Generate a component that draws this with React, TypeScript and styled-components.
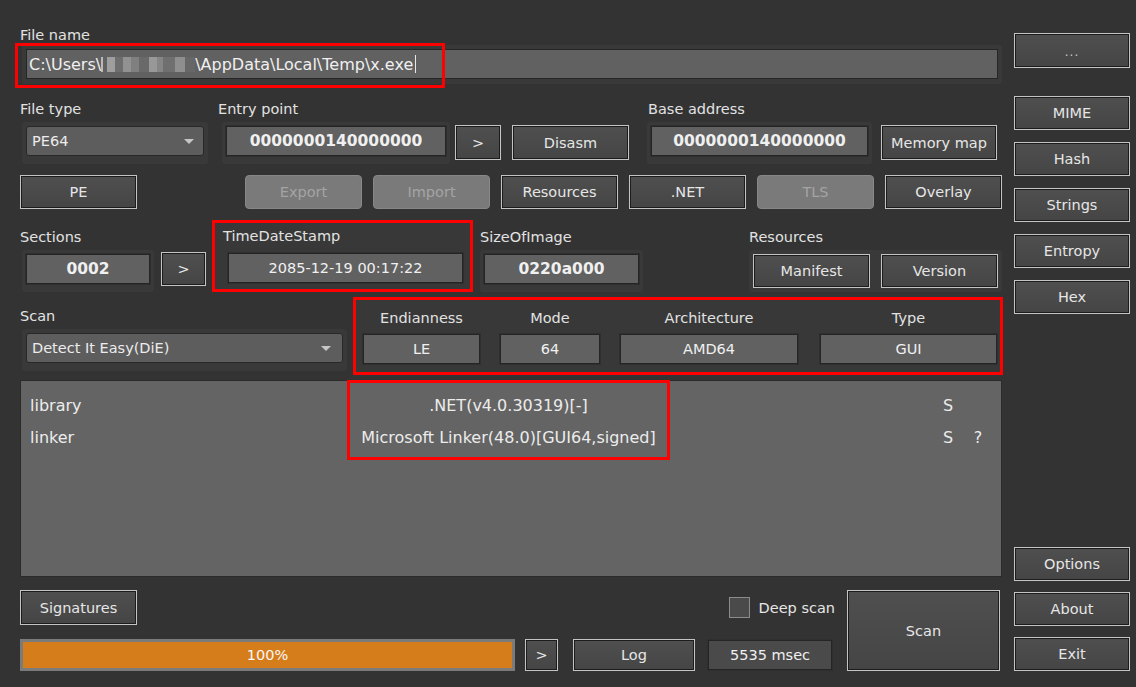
import React from "react";
import styled, { createGlobalStyle } from "styled-components";

const GlobalStyle = createGlobalStyle`
  html, body {
    margin: 0;
    padding: 0;
    background: #333333;
  }
  body {
    font-family: "DejaVu Sans", "Liberation Sans", sans-serif;
    font-size: 14.5px;
    color: #e0e0e0;
  }
  * {
    box-sizing: border-box;
  }
`;

const Window = styled.div`
  width: 1136px;
  height: 687px;
  background: #333333;
  display: flex;
  gap: 10px;
  padding: 26px 0 16px 20px;
  overflow: hidden;
`;

const Main = styled.div`
  width: 984px;
  display: flex;
  flex-direction: column;
`;

const Side = styled.div`
  width: 116px;
  display: flex;
  flex-direction: column;
  padding-top: 7px;
`;

const Row = styled.div<{ $mt: number }>`
  display: flex;
  align-items: flex-end;
  margin-top: ${(p) => p.$mt}px;
`;

const Group = styled.div<{ $ml?: number; $mb?: number }>`
  display: flex;
  flex-direction: column;
  flex: none;
  margin-left: ${(p) => p.$ml ?? 0}px;
  margin-bottom: ${(p) => p.$mb ?? 0}px;
`;

const Label = styled.div<{ $indent?: number; $center?: boolean }>`
  height: 18px;
  line-height: 18px;
  margin-left: ${(p) => p.$indent ?? 0}px;
  text-align: ${(p) => (p.$center ? "center" : "left")};
  color: #e2e2e2;
  white-space: nowrap;
`;

const Frame = styled.div<{ $w: number; $ml?: number; $tight?: boolean }>`
  width: ${(p) => p.$w}px;
  margin-left: ${(p) => p.$ml ?? 0}px;
  margin-top: 4px;
  padding: ${(p) => (p.$tight ? "4px" : "4px 4px 8px")};
  background: #393939;
  border-radius: 3px;
  display: flex;
  gap: 11px;
`;

const Field = styled.div<{ $bold?: boolean; $w?: number; $dim?: boolean }>`
  flex: none;
  height: 30px;
  width: ${(p) => (p.$w ? `${p.$w}px` : "100%")};
  background: ${(p) => (p.$dim ? "#4a4a4a" : "#616161")};
  border: 1px solid #252525;
  box-shadow: 0 0 0 1px #2f2f2f;
  display: flex;
  align-items: center;
  justify-content: center;
  color: #f0f0f0;
  white-space: nowrap;
  font-weight: ${(p) => (p.$bold ? 700 : 400)};
  font-size: ${(p) => (p.$bold ? "15.5px" : "14.5px")};
`;

const Combo = styled.div<{ $pad: number }>`
  height: 30px;
  width: 100%;
  background: #5d5d5d;
  border: 1px solid #282828;
  border-radius: 3px;
  display: flex;
  align-items: center;
  padding: 0 ${(p) => p.$pad}px 0 5px;
  color: #ececec;
`;

const ComboArrow = styled.span`
  margin-left: auto;
  width: 0;
  height: 0;
  border-left: 5px solid transparent;
  border-right: 5px solid transparent;
  border-top: 5px solid #c6c6c6;
`;

const Button = styled.button<{ $w: number; $h?: number; $ml?: number; $mb?: number }>`
  flex: none;
  width: ${(p) => p.$w}px;
  height: ${(p) => p.$h ?? 34}px;
  margin: 0 0 ${(p) => p.$mb ?? 0}px ${(p) => p.$ml ?? 0}px;
  padding: 0;
  font: inherit;
  color: #e6e6e6;
  background: linear-gradient(#4f4f4f, #454545);
  border: 1px solid #c4c4c4;
  box-shadow: inset 0 0 0 1px #1c1c1c;
  cursor: default;

  &:disabled {
    background: #7a7a7a;
    border: 1px solid #878787;
    border-radius: 4px;
    box-shadow: none;
    color: #a4a4a4;
  }
`;

const SideButton = styled(Button)<{ $mt?: number }>`
  margin-top: ${(p) => p.$mt ?? 0}px;
`;

const Dots = styled.span`
  font-size: 12px;
  letter-spacing: 1px;
  color: #c8c8c8;
`;

const PathFrame = styled.div`
  position: relative;
  width: 980px;
  margin: 1px 0 0 2px;
  padding: 4px 4px 5px;
  background: #393939;
  border-radius: 3px;
`;

const PathInput = styled.div`
  height: 30px;
  background: #616161;
  border: 1px solid #262626;
  display: flex;
  align-items: center;
  padding-left: 2px;
  font-size: 16px;
  color: #f0f0f0;
  white-space: nowrap;
`;

/* pixelated block hiding the user name inside the path */
const Smudge = styled.span`
  display: inline-block;
  width: 94px;
  height: 15px;
  background: linear-gradient(
    90deg,
    #c9c9c9 0 2px,
    #616161 2px 6px,
    #a9a9a9 6px 14px,
    #707070 14px 22px,
    #9a9a9a 22px 30px,
    #858585 30px 38px,
    #6b6b6b 38px 48px,
    #a2a2a2 48px 56px,
    #8c8c8c 56px 62px,
    #727272 62px 74px,
    #979797 74px 84px,
    #686868 84px
  );
  opacity: 0.85;
`;

const Caret = styled.span`
  display: inline-block;
  width: 1px;
  height: 18px;
  margin-left: 2px;
  background: #e8e8e8;
`;

const Mark = styled.div<{ $l: number; $t: number; $w: number; $h: number }>`
  position: absolute;
  left: ${(p) => p.$l}px;
  top: ${(p) => p.$t}px;
  width: ${(p) => p.$w}px;
  height: ${(p) => p.$h}px;
  border: 3px solid #ff0000;
  pointer-events: none;
`;

const MarkedGroup = styled.div<{ $w: number; $h: number; $ml: number }>`
  flex: none;
  width: ${(p) => p.$w}px;
  height: ${(p) => p.$h}px;
  margin-left: ${(p) => p.$ml}px;
  border: 3px solid #ff0000;
`;

const GroupPanel = styled.div<{ $pad: string }>`
  height: 100%;
  padding: ${(p) => p.$pad};
  background: #383838;
  display: flex;
  flex-direction: column;
  gap: 8px;
`;

const InfoRow = styled.div`
  height: 100%;
  padding: 9px 3px 8px 7px;
  background: #383838;
  display: flex;
  gap: 20px;
`;

const InfoCell = styled.div<{ $w: number; $gap?: number }>`
  width: ${(p) => p.$w}px;
  margin-left: ${(p) => p.$gap ?? 0}px;
  display: flex;
  flex-direction: column;
  gap: 7px;
`;

const Results = styled.div`
  position: relative;
  width: 982px;
  height: 198px;
  margin-top: 5px;
  padding-top: 8px;
  background: #646464;
  border: 1px solid #2b2b2b;
  font-size: 16px;
  color: #ececec;
`;

const ResultRow = styled.div`
  display: grid;
  grid-template-columns: 326px 323px 263px 30px 30px;
  height: 32px;
  align-items: center;
  white-space: nowrap;
`;

const Cell = styled.span<{ $center?: boolean }>`
  padding-left: ${(p) => (p.$center ? 0 : 9)}px;
  text-align: ${(p) => (p.$center ? "center" : "left")};
`;

const Bottom = styled.div`
  display: flex;
  margin-top: 13px;
`;

const BottomLeft = styled.div`
  width: 820px;
  display: flex;
  flex-direction: column;
  gap: 14px;
`;

const BottomRow = styled.div`
  display: flex;
  align-items: center;
`;

const Check = styled.label`
  margin-left: auto;
  margin-right: 5px;
  display: flex;
  align-items: center;
  gap: 9px;
  color: #e6e6e6;
`;

const CheckBox = styled.span`
  width: 21px;
  height: 21px;
  background: #4a4a4a;
  border: 1px solid #8c8c8c;
`;

const Progress = styled.div`
  width: 495px;
  height: 32px;
  background: #d67d1b;
  border: 3px solid #7b7b7b;
  display: flex;
  align-items: center;
  justify-content: center;
  color: #f6f6f6;
`;

const results = [
  { type: "library", name: ".NET(v4.0.30319)[-]", s: "S", q: "" },
  { type: "linker", name: "Microsoft Linker(48.0)[GUI64,signed]", s: "S", q: "?" },
];

const tabs = ["Export", "Import", "Resources", ".NET", "TLS", "Overlay"];
const disabledTabs = ["Export", "Import", "TLS"];

const info = [
  { label: "Endianness", value: "LE", w: 117, gap: 0 },
  { label: "Mode", value: "64", w: 100, gap: 0 },
  { label: "Architecture", value: "AMD64", w: 178, gap: 0 },
  { label: "Type", value: "GUI", w: 177, gap: 2 },
];

export default function App() {
  return (
    <>
      <GlobalStyle />
      <Window>
        <Main>
          <Label>File name</Label>
          <PathFrame>
            <PathInput>
              C:\Users\
              <Smudge />
              \AppData\Local\Temp\x.exe
              <Caret />
            </PathInput>
            <Mark $l={-7} $t={-2} $w={430} $h={45} />
          </PathFrame>

          <Row $mt={16}>
            <Group>
              <Label>File type</Label>
              <Frame $w={186} $ml={2}>
                <Combo $pad={9}>
                  PE64
                  <ComboArrow />
                </Combo>
              </Frame>
            </Group>
            <Group $ml={10}>
              <Label>Entry point</Label>
              <Frame $w={228} $ml={4}>
                <Field $bold>0000000140000000</Field>
              </Frame>
            </Group>
            <Button $w={46} $h={35} $ml={5} $mb={4}>&gt;</Button>
            <Button $w={117} $h={35} $ml={11} $mb={4}>Disasm</Button>
            <Group $ml={18}>
              <Label $indent={1}>Base address</Label>
              <Frame $w={225}>
                <Field $bold>0000000140000000</Field>
              </Frame>
            </Group>
            <Button $w={116} $h={35} $ml={9} $mb={4}>Memory map</Button>
          </Row>

          <Row $mt={11}>
            <Button $w={117}>PE</Button>
            {tabs.map((t, i) => (
              <Button key={t} $w={117} $ml={i === 0 ? 108 : 11} disabled={disabledTabs.includes(t)}>
                {t}
              </Button>
            ))}
          </Row>

          <Row $mt={11}>
            <Group>
              <Label>Sections</Label>
              <Frame $w={132} $ml={2}>
                <Field $bold>0002</Field>
              </Frame>
            </Group>
            <Button $w={45} $ml={7} $mb={6}>&gt;</Button>
            <MarkedGroup $w={261} $h={72} $ml={6}>
              <GroupPanel $pad="4px 7px 6px 13px">
                <Label $indent={-5}>TimeDateStamp</Label>
                <Field $w={235}>2085-12-19 00:17:22</Field>
              </GroupPanel>
            </MarkedGroup>
            <Group $ml={7}>
              <Label>SizeOfImage</Label>
              <Frame $w={163}>
                <Field $bold>0220a000</Field>
              </Frame>
            </Group>
            <Group $ml={106}>
              <Label>Resources</Label>
              <Frame $w={253} $tight>
                <Button $w={117}>Manifest</Button>
                <Button $w={117}>Version</Button>
              </Frame>
            </Group>
          </Row>

          <Row $mt={5}>
            <Group $mb={4}>
              <Label>Scan</Label>
              <Frame $w={325} $ml={2}>
                <Combo $pad={11}>
                  Detect It Easy(DiE)
                  <ComboArrow />
                </Combo>
              </Frame>
            </Group>
            <MarkedGroup $w={650} $h={78} $ml={6}>
              <InfoRow>
                {info.map((c) => (
                  <InfoCell key={c.label} $w={c.w} $gap={c.gap}>
                    <Label $center>{c.label}</Label>
                    <Field>{c.value}</Field>
                  </InfoCell>
                ))}
              </InfoRow>
            </MarkedGroup>
          </Row>

          <Results>
            {results.map((r) => (
              <ResultRow key={r.type}>
                <Cell>{r.type}</Cell>
                <Cell $center>{r.name}</Cell>
                <span />
                <Cell $center>{r.s}</Cell>
                <Cell $center>{r.q}</Cell>
              </ResultRow>
            ))}
            <Mark $l={326} $t={-1} $w={323} $h={80} />
          </Results>

          <Bottom>
            <BottomLeft>
              <BottomRow>
                <Button $w={117} $h={35}>Signatures</Button>
                <Check>
                  <CheckBox />
                  Deep scan
                </Check>
              </BottomRow>
              <BottomRow>
                <Progress>100%</Progress>
                <Button $w={33} $h={32} $ml={10}>&gt;</Button>
                <Button $w={122} $h={32} $ml={15}>Log</Button>
                <Field $w={124} $dim style={{ marginLeft: 13 }}>5535 msec</Field>
              </BottomRow>
            </BottomLeft>
            <Button $w={153} $h={81} $ml={7}>Scan</Button>
          </Bottom>
        </Main>

        <Side>
          <SideButton $w={116} $h={35}>
            <Dots>...</Dots>
          </SideButton>
          <SideButton $w={116} $mt={28}>MIME</SideButton>
          <SideButton $w={116} $mt={12}>Hash</SideButton>
          <SideButton $w={116} $mt={12}>Strings</SideButton>
          <SideButton $w={116} $mt={12}>Entropy</SideButton>
          <SideButton $w={116} $mt={12}>Hex</SideButton>
          <SideButton $w={116} style={{ marginTop: "auto" }}>Options</SideButton>
          <SideButton $w={116} $mt={11}>About</SideButton>
          <SideButton $w={116} $mt={11}>Exit</SideButton>
        </Side>
      </Window>
    </>
  );
}
